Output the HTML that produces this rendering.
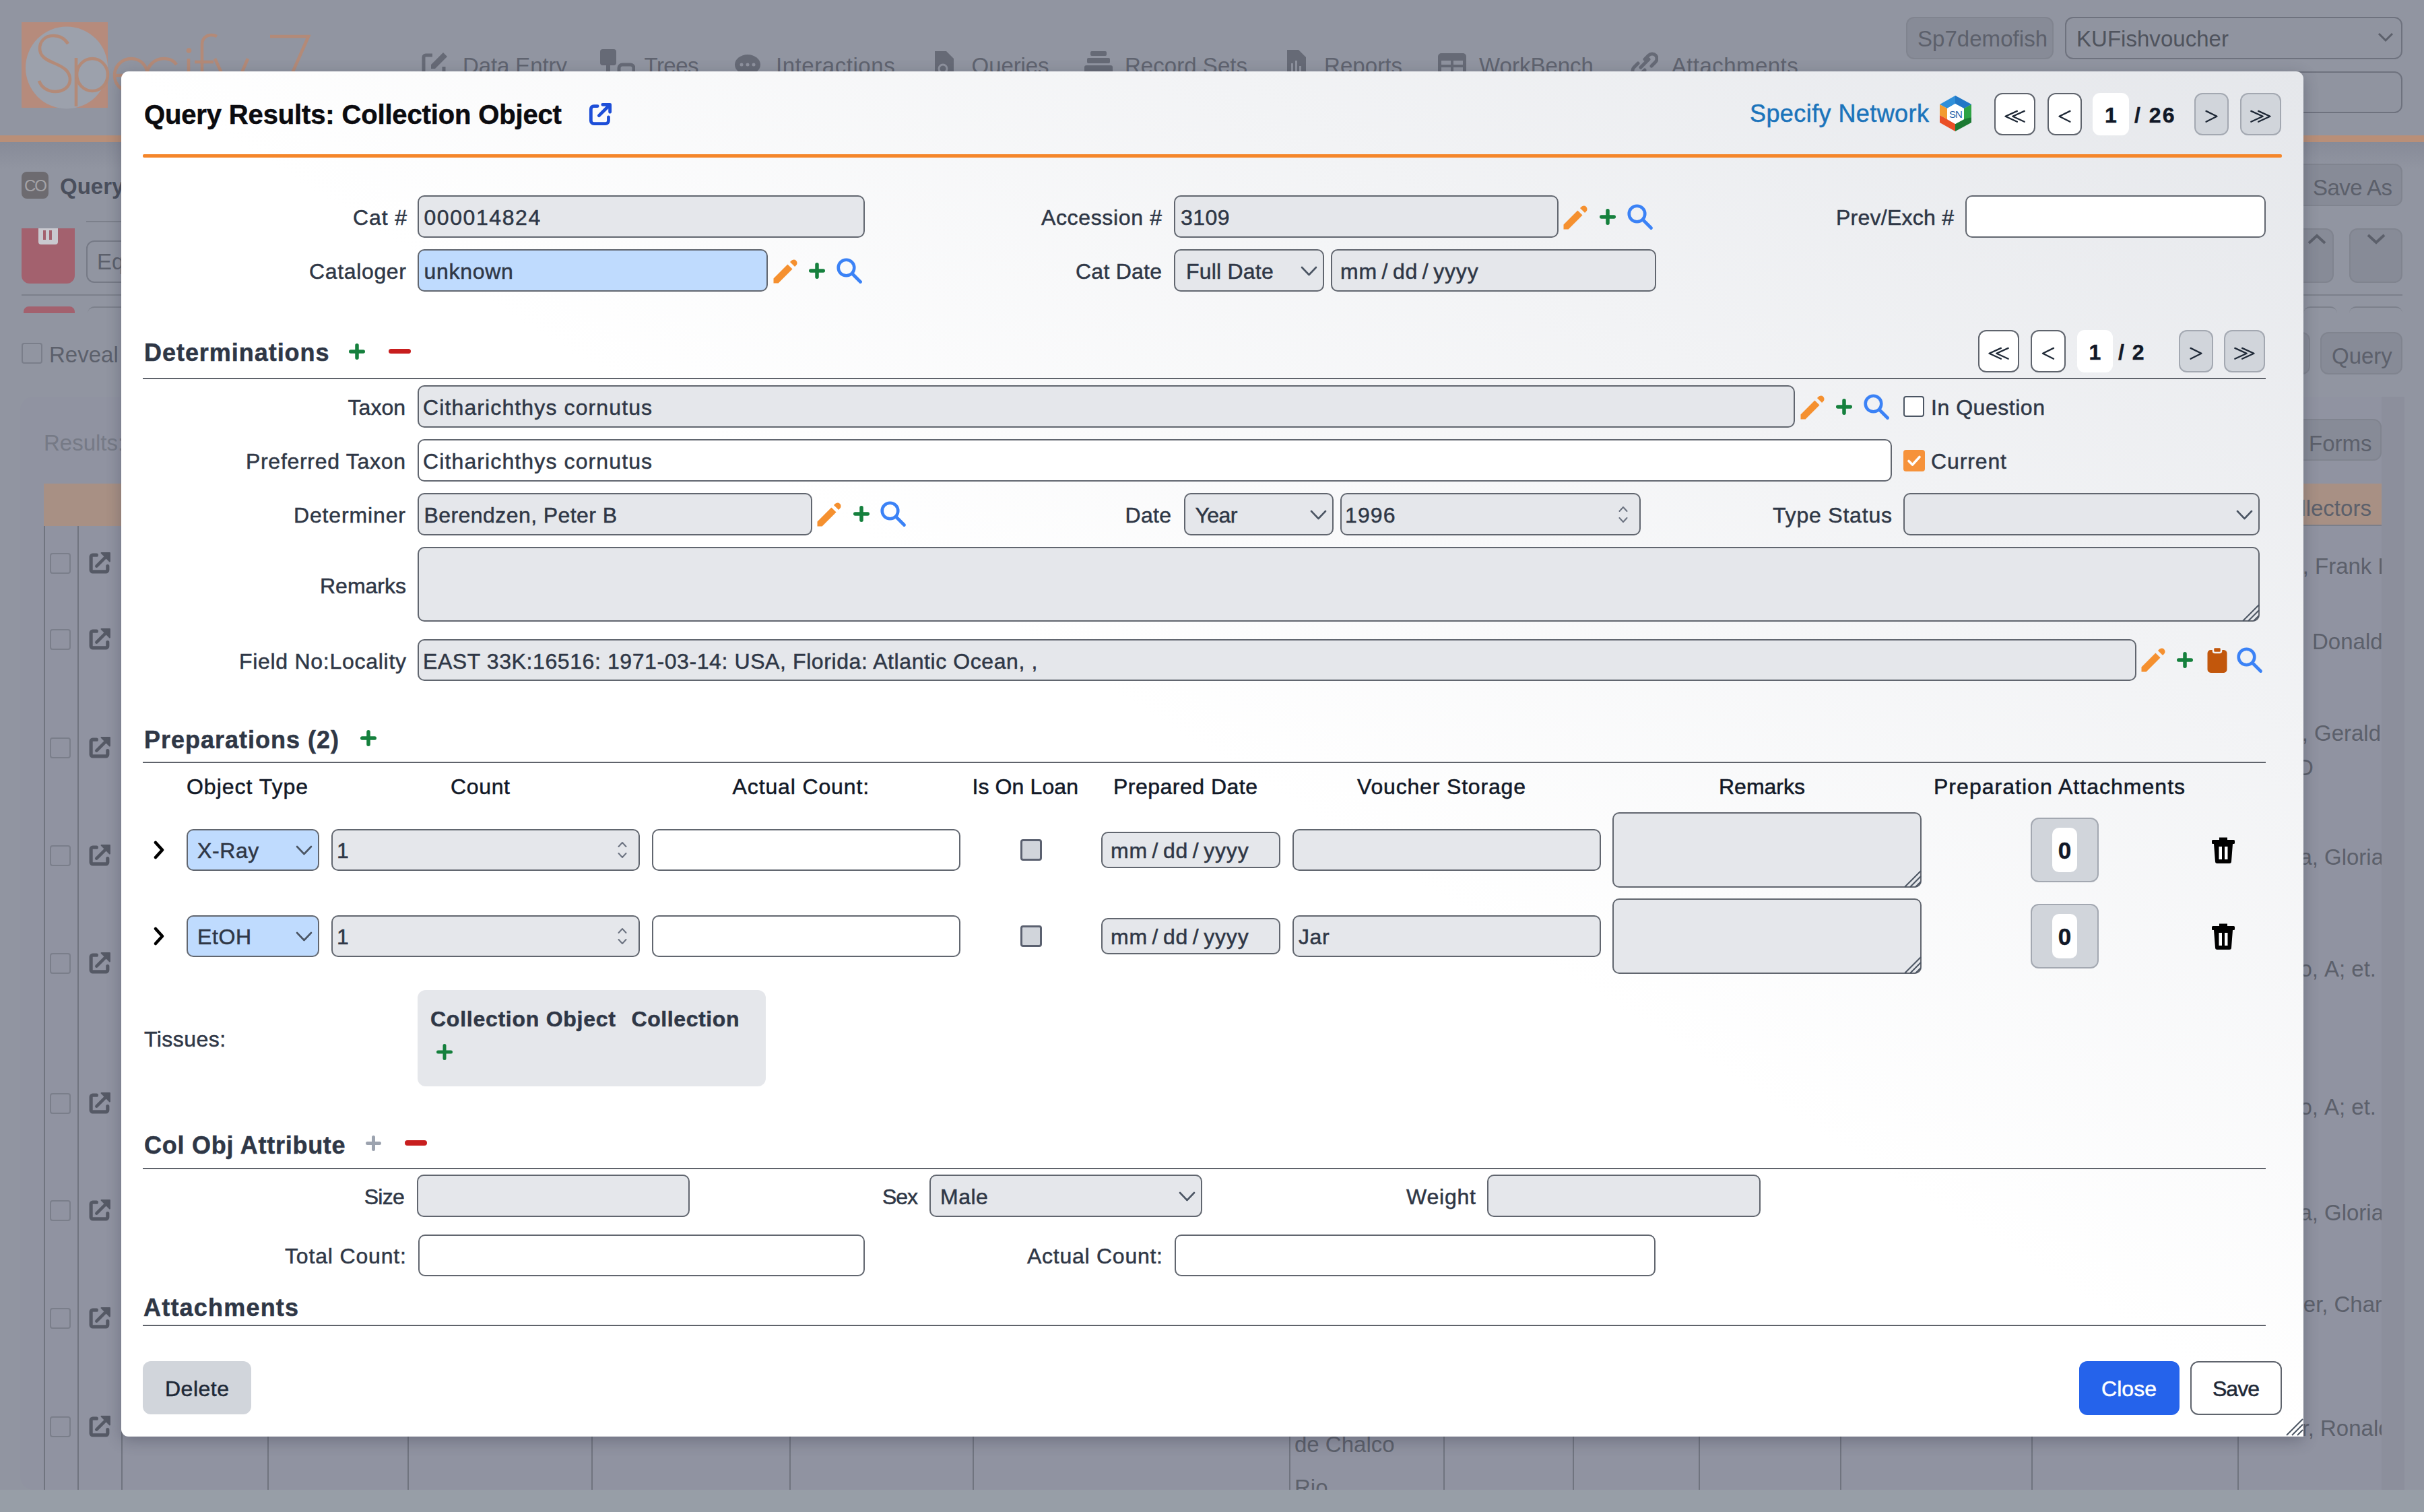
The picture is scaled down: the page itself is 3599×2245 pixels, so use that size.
<!DOCTYPE html>
<html><head><meta charset="utf-8">
<style>
*{box-sizing:border-box;margin:0;padding:0}
html,body{width:3599px;height:2245px;overflow:hidden;background:#9195a1;font-family:"Liberation Sans",sans-serif}
.a{position:absolute}
#bg{position:absolute;left:0;top:0;width:3599px;height:2245px;background:#9195a1;overflow:hidden}
.bgt{position:absolute;color:#5c606b;font-size:33px;white-space:nowrap}
.bgbox{position:absolute;border:2px solid #7d818d;border-radius:12px}
#dlg{position:absolute;left:180px;top:106px;width:3240px;height:2027px;border-radius:11px 11px 0 11px;background:linear-gradient(to bottom left,#e5e7eb 0%,#ffffff 50%,#ffffff 100%);box-shadow:0 6px 22px rgba(40,44,62,.32)}
.t{position:absolute;white-space:nowrap;color:#2e3440;font-size:32px;line-height:36px;-webkit-text-stroke:0.5px currentColor}
.lbl{position:absolute;white-space:nowrap;color:#2e3440;font-size:32px;line-height:36px;text-align:right}
.inp{position:absolute;border:2px solid #61666f;border-radius:10px;background:#e6e7eb;height:63px;
 color:#2e3440;font-size:32px;line-height:59px;padding-left:9px;white-space:nowrap;overflow:hidden}
.wh{background:#fff}
.bl{background:#bfdbfe}
.hdr{position:absolute;white-space:nowrap;color:#2e3440;font-size:35px;font-weight:bold;line-height:40px}
.hr{position:absolute;height:2px;background:#5f636b}
</style></head><body>
<div id="bg">
<div class="a" style="left:0px;top:211px;width:3599px;height:40px;background:linear-gradient(#878b98,#9195a1)"></div>
<div class="a" style="left:0px;top:201px;width:3599px;height:10px;background:#b98f78"></div>
<svg class="a" style="left:0;top:0" width="480" height="180" viewBox="0 0 480 180">
<rect x="32" y="33" width="128" height="127" fill="#b68b7c"/>
<circle cx="99" cy="100.5" r="61" fill="#9ca1ac"/>
<g fill="none" stroke="#b38a78" stroke-width="4.6" stroke-linecap="butt">
<path d="M101 65C96 57 88 53 79 53C66 53 59 62 59 72C59 84 69 89 81 94C95 100 104 106 104 118C104 129 94 136 82 136C70 136 61 129 58 120"/>
<path d="M113 86V158"/>
<ellipse cx="137" cy="111" rx="23" ry="24"/>
<path d="M170 112H219C219 97 208 87 195 87C181 87 170 98 170 112C170 126 181 136 195 136C204 136 211 132 215 126"/>
<path d="M262 96C258 90 251 87 243 87C229 87 218 98 218 112C218 126 229 136 243 136C251 136 258 133 262 127"/>
<path d="M280 87V136"/>
<path d="M300 136V66C300 57 306 52 314 52C317 52 320 53 322 54"/>
<path d="M289 92H317"/>
<path d="M319 87L342 136M368 87L332 170"/>
<path d="M401 54H458L420 140"/>
</g>
<circle cx="280.5" cy="75" r="3.8" fill="#b38a78"/>
</svg>
<div class="bgt" style="left:687px;top:79.2px;font-size:33px;color:#5f636f;letter-spacing:-0.10px;">Data Entry</div>
<div class="bgt" style="left:956.5px;top:79.2px;font-size:33px;color:#5f636f;letter-spacing:-0.54px;">Trees</div>
<div class="bgt" style="left:1152px;top:79.2px;font-size:33px;color:#5f636f;letter-spacing:0.55px;">Interactions</div>
<div class="bgt" style="left:1442.6px;top:79.2px;font-size:33px;color:#5f636f;letter-spacing:-0.09px;">Queries</div>
<div class="bgt" style="left:1670px;top:79.2px;font-size:33px;color:#5f636f;letter-spacing:0.04px;">Record Sets</div>
<div class="bgt" style="left:1966px;top:79.2px;font-size:33px;color:#5f636f;letter-spacing:0.07px;">Reports</div>
<div class="bgt" style="left:2196px;top:79.2px;font-size:33px;color:#5f636f;letter-spacing:0.00px;">WorkBench</div>
<div class="bgt" style="left:2481.7px;top:79.2px;font-size:33px;color:#5f636f;letter-spacing:0.46px;">Attachments</div>
<svg class="a" style="left:624px;top:74px" width="44" height="40" viewBox="0 0 44 40"><path d="M18 8H8a3 3 0 0 0-3 3v24a3 3 0 0 0 3 3h24a3 3 0 0 0 3-3V25" fill="none" stroke="#666a76" stroke-width="5"/><path d="M34 4L40 10L22 28H16V22Z" fill="#666a76"/></svg>
<svg class="a" style="left:889px;top:72px" width="54" height="40" viewBox="0 0 54 40"><rect x="2" y="1" width="24" height="24" rx="4" fill="#666a76"/><rect x="11" y="22" width="6" height="16" fill="#666a76"/><rect x="30" y="24" width="22" height="16" rx="5" fill="none" stroke="#666a76" stroke-width="5"/></svg>
<svg class="a" style="left:1090px;top:79px" width="42" height="34" viewBox="0 0 42 34"><ellipse cx="20" cy="17" rx="19" ry="15" fill="#666a76"/><circle cx="11" cy="17" r="2.5" fill="#8f939f"/><circle cx="20" cy="17" r="2.5" fill="#8f939f"/><circle cx="29" cy="17" r="2.5" fill="#8f939f"/></svg>
<svg class="a" style="left:1385px;top:76px" width="34" height="34" viewBox="0 0 34 34"><path d="M3 0H20L31 11V34H3Z" fill="#666a76"/><circle cx="15" cy="26" r="6" fill="none" stroke="#8f939f" stroke-width="3"/></svg>
<svg class="a" style="left:1609px;top:76px" width="44" height="34" viewBox="0 0 44 34"><rect x="10" y="0" width="24" height="7" rx="2" fill="#666a76"/><rect x="5" y="10" width="34" height="8" rx="2" fill="#666a76"/><rect x="1" y="21" width="42" height="13" rx="3" fill="#666a76"/></svg>
<svg class="a" style="left:1908px;top:74px" width="34" height="36" viewBox="0 0 34 36"><path d="M3 0H20L31 11V36H3Z" fill="#666a76"/><rect x="9" y="20" width="3" height="12" fill="#8f939f"/><rect x="15" y="16" width="3" height="16" fill="#8f939f"/><rect x="21" y="24" width="3" height="8" fill="#8f939f"/></svg>
<svg class="a" style="left:2134px;top:78px" width="44" height="34" viewBox="0 0 44 34"><rect x="1" y="1" width="42" height="32" rx="5" fill="#666a76"/><rect x="6" y="12" width="14" height="6" fill="#8f939f"/><rect x="24" y="12" width="14" height="6" fill="#8f939f"/><rect x="6" y="22" width="14" height="6" fill="#8f939f"/><rect x="24" y="22" width="14" height="6" fill="#8f939f"/></svg>
<svg class="a" style="left:2418px;top:74px" width="44" height="40" viewBox="0 0 44 40"><path d="M18 26L30 14M14 20L8 26a7 7 0 0 0 10 10l6-6M24 14l6-6a7 7 0 0 1 10 10l-6 6" fill="none" stroke="#666a76" stroke-width="5" stroke-linecap="round"/></svg>
<div class="bgbox" style="left:2830px;top:25px;width:219px;height:63px;background:#878b97;border-color:#80848f"></div>
<div class="bgt" style="left:2847px;top:39.2px;font-size:33px;color:#5c606b;letter-spacing:0.04px;">Sp7demofish</div>
<div class="bgbox" style="left:3066px;top:25px;width:501px;height:63px;background:#9094a0;border-color:#6e727e"></div>
<div class="bgt" style="left:3083px;top:39.2px;font-size:33px;color:#4f535d;letter-spacing:0.03px;">KUFishvoucher</div>
<svg class="a" style="left:3530px;top:48px" width="24" height="16" viewBox="0 0 24 16"><path d="M2 2L12 12L22 2" fill="none" stroke="#5c606b" stroke-width="3"/></svg>
<div class="bgbox" style="left:2840px;top:106px;width:727px;height:62px;background:#9094a0;border-color:#6e727e"></div>
<div class="a" style="left:32px;top:255px;width:40px;height:40px;background:#6d6b70;border-radius:8px"></div>
<div class="bgt" style="left:36px;top:261.8px;font-size:24px;color:#a4a3a8;letter-spacing:-2px;">CO</div>
<div class="bgt" style="left:89px;top:258.2px;font-size:33px;color:#4a4f5c;font-weight:bold;">Query</div>
<div class="a" style="left:32px;top:339px;width:79px;height:82px;background:#a3616e;border-radius:0 0 12px 12px"></div>
<div class="a" style="left:57px;top:339px;width:29px;height:24px;background:#c9c9cf;border-radius:0 0 4px 4px"></div>
<div class="a" style="left:64px;top:342px;width:4px;height:14px;background:#a3616e"></div>
<div class="a" style="left:73px;top:342px;width:4px;height:14px;background:#a3616e"></div>
<div class="a" style="left:128px;top:357px;width:70px;height:63px;border:2px solid #767a86;border-radius:12px"></div>
<div class="bgt" style="left:144px;top:370.2px;font-size:33px;color:#5c606b;">Eq</div>
<div class="a" style="left:128px;top:328px;width:60px;height:2px;background:#7c808b"></div>
<div class="a" style="left:32px;top:437px;width:160px;height:2px;background:#7c808b"></div>
<div class="a" style="left:35px;top:455px;width:76px;height:10px;background:#a3616e;border-radius:8px 8px 0 0"></div>
<div class="a" style="left:130px;top:455px;width:60px;height:10px;border-top:2px solid #7c808b;border-radius:10px 10px 0 0"></div>
<div class="a" style="left:32px;top:509px;width:31px;height:31px;border:2px solid #7a7e8a;border-radius:4px"></div>
<div class="bgt" style="left:73px;top:508.2px;font-size:33px;color:#5c606b;">Reveal</div>
<div class="a" style="left:30px;top:589px;width:3540px;height:1623px;background:#9093a1;border-radius:20px"></div>
<div class="bgt" style="left:65px;top:639.2px;font-size:33px;color:#767a86;">Results:</div>
<div class="a" style="left:65px;top:718px;width:3471px;height:63px;background:#a89084"></div>
<div class="a" style="left:65px;top:781px;width:2px;height:1431px;background:#70747f"></div>
<div class="a" style="left:115px;top:781px;width:2px;height:1431px;background:#70747f"></div>
<div class="a" style="left:180px;top:781px;width:2px;height:1431px;background:#70747f"></div>
<div class="a" style="left:397px;top:781px;width:2px;height:1431px;background:#70747f"></div>
<div class="a" style="left:605px;top:781px;width:2px;height:1431px;background:#70747f"></div>
<div class="a" style="left:878px;top:781px;width:2px;height:1431px;background:#70747f"></div>
<div class="a" style="left:1172px;top:781px;width:2px;height:1431px;background:#70747f"></div>
<div class="a" style="left:1444px;top:781px;width:2px;height:1431px;background:#70747f"></div>
<div class="a" style="left:1914px;top:781px;width:2px;height:1431px;background:#70747f"></div>
<div class="a" style="left:2143px;top:781px;width:2px;height:1431px;background:#70747f"></div>
<div class="a" style="left:2335px;top:781px;width:2px;height:1431px;background:#70747f"></div>
<div class="a" style="left:2522px;top:781px;width:2px;height:1431px;background:#70747f"></div>
<div class="a" style="left:2732px;top:781px;width:2px;height:1431px;background:#70747f"></div>
<div class="a" style="left:3016px;top:781px;width:2px;height:1431px;background:#70747f"></div>
<div class="a" style="left:3322px;top:781px;width:2px;height:1431px;background:#70747f"></div>
<div class="a" style="left:74px;top:821px;width:31px;height:31px;border:2px solid #7a7e8a;border-radius:4px"></div>
<svg class="a" style="left:131px;top:818px" width="35" height="35" viewBox="0 0 34 34"><path d="M12 6H6.5a2.5 2.5 0 0 0-2.5 2.5v19a2.5 2.5 0 0 0 2.5 2.5h19a2.5 2.5 0 0 0 2.5-2.5V22" fill="none" stroke="#555965" stroke-width="5" stroke-linecap="round" stroke-linejoin="round"/><path d="M19 3H31V15Z" fill="#555965" stroke="#555965" stroke-width="2" stroke-linejoin="round"/><path d="M28 6L12 22" stroke="#555965" stroke-width="4.5" stroke-linecap="round"/></svg>
<div class="a" style="left:74px;top:934px;width:31px;height:31px;border:2px solid #7a7e8a;border-radius:4px"></div>
<svg class="a" style="left:131px;top:931px" width="35" height="35" viewBox="0 0 34 34"><path d="M12 6H6.5a2.5 2.5 0 0 0-2.5 2.5v19a2.5 2.5 0 0 0 2.5 2.5h19a2.5 2.5 0 0 0 2.5-2.5V22" fill="none" stroke="#555965" stroke-width="5" stroke-linecap="round" stroke-linejoin="round"/><path d="M19 3H31V15Z" fill="#555965" stroke="#555965" stroke-width="2" stroke-linejoin="round"/><path d="M28 6L12 22" stroke="#555965" stroke-width="4.5" stroke-linecap="round"/></svg>
<div class="a" style="left:74px;top:1095px;width:31px;height:31px;border:2px solid #7a7e8a;border-radius:4px"></div>
<svg class="a" style="left:131px;top:1092px" width="35" height="35" viewBox="0 0 34 34"><path d="M12 6H6.5a2.5 2.5 0 0 0-2.5 2.5v19a2.5 2.5 0 0 0 2.5 2.5h19a2.5 2.5 0 0 0 2.5-2.5V22" fill="none" stroke="#555965" stroke-width="5" stroke-linecap="round" stroke-linejoin="round"/><path d="M19 3H31V15Z" fill="#555965" stroke="#555965" stroke-width="2" stroke-linejoin="round"/><path d="M28 6L12 22" stroke="#555965" stroke-width="4.5" stroke-linecap="round"/></svg>
<div class="a" style="left:74px;top:1255px;width:31px;height:31px;border:2px solid #7a7e8a;border-radius:4px"></div>
<svg class="a" style="left:131px;top:1252px" width="35" height="35" viewBox="0 0 34 34"><path d="M12 6H6.5a2.5 2.5 0 0 0-2.5 2.5v19a2.5 2.5 0 0 0 2.5 2.5h19a2.5 2.5 0 0 0 2.5-2.5V22" fill="none" stroke="#555965" stroke-width="5" stroke-linecap="round" stroke-linejoin="round"/><path d="M19 3H31V15Z" fill="#555965" stroke="#555965" stroke-width="2" stroke-linejoin="round"/><path d="M28 6L12 22" stroke="#555965" stroke-width="4.5" stroke-linecap="round"/></svg>
<div class="a" style="left:74px;top:1415px;width:31px;height:31px;border:2px solid #7a7e8a;border-radius:4px"></div>
<svg class="a" style="left:131px;top:1412px" width="35" height="35" viewBox="0 0 34 34"><path d="M12 6H6.5a2.5 2.5 0 0 0-2.5 2.5v19a2.5 2.5 0 0 0 2.5 2.5h19a2.5 2.5 0 0 0 2.5-2.5V22" fill="none" stroke="#555965" stroke-width="5" stroke-linecap="round" stroke-linejoin="round"/><path d="M19 3H31V15Z" fill="#555965" stroke="#555965" stroke-width="2" stroke-linejoin="round"/><path d="M28 6L12 22" stroke="#555965" stroke-width="4.5" stroke-linecap="round"/></svg>
<div class="a" style="left:74px;top:1623px;width:31px;height:31px;border:2px solid #7a7e8a;border-radius:4px"></div>
<svg class="a" style="left:131px;top:1620px" width="35" height="35" viewBox="0 0 34 34"><path d="M12 6H6.5a2.5 2.5 0 0 0-2.5 2.5v19a2.5 2.5 0 0 0 2.5 2.5h19a2.5 2.5 0 0 0 2.5-2.5V22" fill="none" stroke="#555965" stroke-width="5" stroke-linecap="round" stroke-linejoin="round"/><path d="M19 3H31V15Z" fill="#555965" stroke="#555965" stroke-width="2" stroke-linejoin="round"/><path d="M28 6L12 22" stroke="#555965" stroke-width="4.5" stroke-linecap="round"/></svg>
<div class="a" style="left:74px;top:1782px;width:31px;height:31px;border:2px solid #7a7e8a;border-radius:4px"></div>
<svg class="a" style="left:131px;top:1779px" width="35" height="35" viewBox="0 0 34 34"><path d="M12 6H6.5a2.5 2.5 0 0 0-2.5 2.5v19a2.5 2.5 0 0 0 2.5 2.5h19a2.5 2.5 0 0 0 2.5-2.5V22" fill="none" stroke="#555965" stroke-width="5" stroke-linecap="round" stroke-linejoin="round"/><path d="M19 3H31V15Z" fill="#555965" stroke="#555965" stroke-width="2" stroke-linejoin="round"/><path d="M28 6L12 22" stroke="#555965" stroke-width="4.5" stroke-linecap="round"/></svg>
<div class="a" style="left:74px;top:1942px;width:31px;height:31px;border:2px solid #7a7e8a;border-radius:4px"></div>
<svg class="a" style="left:131px;top:1939px" width="35" height="35" viewBox="0 0 34 34"><path d="M12 6H6.5a2.5 2.5 0 0 0-2.5 2.5v19a2.5 2.5 0 0 0 2.5 2.5h19a2.5 2.5 0 0 0 2.5-2.5V22" fill="none" stroke="#555965" stroke-width="5" stroke-linecap="round" stroke-linejoin="round"/><path d="M19 3H31V15Z" fill="#555965" stroke="#555965" stroke-width="2" stroke-linejoin="round"/><path d="M28 6L12 22" stroke="#555965" stroke-width="4.5" stroke-linecap="round"/></svg>
<div class="a" style="left:74px;top:2103px;width:31px;height:31px;border:2px solid #7a7e8a;border-radius:4px"></div>
<svg class="a" style="left:131px;top:2100px" width="35" height="35" viewBox="0 0 34 34"><path d="M12 6H6.5a2.5 2.5 0 0 0-2.5 2.5v19a2.5 2.5 0 0 0 2.5 2.5h19a2.5 2.5 0 0 0 2.5-2.5V22" fill="none" stroke="#555965" stroke-width="5" stroke-linecap="round" stroke-linejoin="round"/><path d="M19 3H31V15Z" fill="#555965" stroke="#555965" stroke-width="2" stroke-linejoin="round"/><path d="M28 6L12 22" stroke="#555965" stroke-width="4.5" stroke-linecap="round"/></svg>
<div class="bgbox" style="left:3400px;top:243px;width:167px;height:63px;background:#878b97;border-color:#80848f"></div>
<div class="bgt" style="left:3434px;top:260.2px;font-size:33px;color:#5c606b;letter-spacing:-0.51px;">Save As</div>
<div class="bgbox" style="left:3380px;top:339px;width:85px;height:81px;background:#878b97;border-color:#80848f"></div>
<svg class="a" style="left:3425px;top:346px" width="30" height="18" viewBox="0 0 30 18"><path d="M3 15L15 4L27 15" fill="none" stroke="#5c606b" stroke-width="4"/></svg>
<div class="bgbox" style="left:3488px;top:339px;width:79px;height:81px;background:#878b97;border-color:#80848f"></div>
<svg class="a" style="left:3513px;top:346px" width="30" height="18" viewBox="0 0 30 18"><path d="M3 3L15 14L27 3" fill="none" stroke="#5c606b" stroke-width="4"/></svg>
<div class="a" style="left:3400px;top:437px;width:167px;height:2px;background:#7c808b"></div>
<div class="a" style="left:3420px;top:455px;width:50px;height:10px;border-top:2px solid #7c808b;border-radius:10px 10px 0 0"></div>
<div class="a" style="left:3488px;top:455px;width:79px;height:10px;border-top:2px solid #7c808b;border-radius:10px 10px 0 0"></div>
<div class="bgbox" style="left:3380px;top:493px;width:50px;height:63px;background:#878b97;border-color:#80848f"></div>
<div class="bgbox" style="left:3445px;top:493px;width:122px;height:63px;background:#878b97;border-color:#80848f"></div>
<div class="bgt" style="left:3462px;top:510.2px;font-size:33px;color:#5c606b;">Query</div>
<div class="bgbox" style="left:3380px;top:622px;width:156px;height:62px;background:#878b97;border-color:#80848f"></div>
<div class="bgt" style="left:3428px;top:640.2px;font-size:33px;color:#5c606b;">Forms</div>
<div class="bgt" style="left:3398px;top:736.2px;font-size:33px;color:#5c606b;">ollectors</div>
<div class="a" style="left:3420px;top:779px;width:116px;height:2px;background:#7b7f8a"></div>
<div class="a" style="left:3380px;top:790px;width:156px;height:1422px;overflow:hidden">
<div class="bgt" style="left:57px;top:32.2px;font-size:33px;color:#5c606b">Frank E</div>
<div class="bgt" style="right:108px;top:32.2px;font-size:33px;color:#5c606b">,</div>
<div class="bgt" style="left:53px;top:144.2px;font-size:33px;color:#5c606b">Donald</div>
<div class="bgt" style="left:56px;top:280.2px;font-size:33px;color:#5c606b">Gerald</div>
<div class="bgt" style="right:109px;top:280.2px;font-size:33px;color:#5c606b">,</div>
<div class="bgt" style="left:31px;top:331.2px;font-size:33px;color:#5c606b">D</div>
<div class="bgt" style="left:71px;top:463.7px;font-size:33px;color:#5c606b">Gloria</div>
<div class="bgt" style="right:94px;top:463.7px;font-size:33px;color:#5c606b">a,</div>
<div class="bgt" style="left:71px;top:630.2px;font-size:33px;color:#5c606b">A; et.</div>
<div class="bgt" style="right:94px;top:630.2px;font-size:33px;color:#5c606b">o,</div>
<div class="bgt" style="left:71px;top:834.7px;font-size:33px;color:#5c606b">A; et.</div>
<div class="bgt" style="right:94px;top:834.7px;font-size:33px;color:#5c606b">o,</div>
<div class="bgt" style="left:71px;top:992.2px;font-size:33px;color:#5c606b">Gloria</div>
<div class="bgt" style="right:94px;top:992.2px;font-size:33px;color:#5c606b">a,</div>
<div class="bgt" style="left:85.5px;top:1127.8px;font-size:33px;color:#5c606b">Char</div>
<div class="bgt" style="right:79.5px;top:1127.8px;font-size:33px;color:#5c606b">er,</div>
<div class="bgt" style="left:65px;top:1312.2px;font-size:33px;color:#5c606b">Ronald</div>
<div class="bgt" style="right:100px;top:1312.2px;font-size:33px;color:#5c606b">r,</div>
</div>
<div class="a" style="left:3536px;top:589px;width:34px;height:1623px;background:#8c8f9c"></div>
<div class="bgt" style="left:1922px;top:2126.2px;font-size:33px;color:#5c606b;">de Chalco</div>
<div class="bgt" style="left:1922px;top:2190.2px;font-size:33px;color:#5c606b;">Rio</div>
<div class="a" style="left:0px;top:2212px;width:3599px;height:33px;background:#979ea7"></div>
</div>
<div id="dlg"></div>
<div id="cont">
<div class="t" style="left:214px;top:147.4px;font-size:40px;line-height:46px;font-weight:bold;color:#0b0b0f;letter-spacing:-0.15px;">Query Results: Collection Object</div>
<svg class="a" style="left:872.5px;top:150.5px" width="37" height="37" viewBox="0 0 34 34"><path d="M13 6H8a4 4 0 0 0-4 4v16a4 4 0 0 0 4 4h16a4 4 0 0 0 4-4v-5" fill="none" stroke="#1d4ed8" stroke-width="4.4" stroke-linecap="round" stroke-linejoin="round"/><path d="M20 4H30V14M29 5L15 19" fill="none" stroke="#1d4ed8" stroke-width="4.4" stroke-linecap="round" stroke-linejoin="round"/></svg>
<div class="t" style="left:2598px;top:147.8px;font-size:36px;line-height:41px;color:#1b74bb;letter-spacing:0.42px;">Specify Network</div>
<svg class="a" style="left:2878px;top:140px" width="52" height="58" viewBox="0 0 52 58">
<polygon points="25,2 49,15 38,21 25,14 13,21 2,15" fill="#2f8fd9"/>
<polygon points="25,2 49,15 38,21 25,14" fill="#2277c6"/>
<polygon points="2,15 13,21 13,37 2,31" fill="#f39b30"/>
<polygon points="2,31 13,37 25,44 25,55 2,42" fill="#ea4f26"/>
<polygon points="49,15 49,34 38,40 38,21" fill="#2ea345"/>
<polygon points="49,34 49,42 25,55 25,44 38,37" fill="#1c7a33"/>
<polygon points="25,14 38,21 38,37 25,44 13,37 13,21" fill="#ffffff"/>
<text x="25.5" y="35" font-family="Liberation Sans" font-size="15" fill="#1f5fa8" text-anchor="middle" letter-spacing="-1">SN</text>
</svg>
<div class="a" style="left:2961px;top:138px;width:61px;height:63px;background:#fff;border:2px solid #5f646d;border-radius:12px"></div>
<svg class="a" style="left:2961px;top:138px" width="61" height="63" viewBox="0 0 61 63"><path d="M33.9 26.9L16.5 34.8L33.9 42.699999999999996M44.7 26.9L27.3 34.8L44.7 42.699999999999996" fill="none" stroke="#1f2937" stroke-width="2.3" stroke-linecap="round" stroke-linejoin="round"/></svg>
<div class="a" style="left:3040px;top:138px;width:51px;height:63px;background:#fff;border:2px solid #5f646d;border-radius:12px"></div>
<svg class="a" style="left:3040px;top:138px" width="51" height="63" viewBox="0 0 51 63"><path d="M33.5 26.9L17.5 34.8L33.5 42.699999999999996" fill="none" stroke="#1f2937" stroke-width="2.3" stroke-linecap="round" stroke-linejoin="round"/></svg>
<div class="a" style="left:3107px;top:138px;width:54px;height:63px;background:#fff;border-radius:11px"></div>
<div class="t" style="left:2734.0px;width:800px;text-align:center;top:152.8px;font-size:32px;line-height:37px;font-weight:bold;color:#111827;">1</div>
<div class="t" style="left:3169px;top:152.8px;font-size:32px;line-height:37px;font-weight:bold;color:#111827;letter-spacing:2.04px;">/ 26</div>
<div class="a" style="left:3258px;top:138px;width:51px;height:63px;background:#d1d5db;border:2px solid #a3a8b1;border-radius:12px"></div>
<svg class="a" style="left:3258px;top:138px" width="51" height="63" viewBox="0 0 51 63"><path d="M17.5 26.9L33.5 34.8L17.5 42.699999999999996" fill="none" stroke="#1f2937" stroke-width="2.3" stroke-linecap="round" stroke-linejoin="round"/></svg>
<div class="a" style="left:3326px;top:138px;width:61px;height:63px;background:#d1d5db;border:2px solid #a3a8b1;border-radius:12px"></div>
<svg class="a" style="left:3326px;top:138px" width="61" height="63" viewBox="0 0 61 63"><path d="M27.1 26.9L44.5 34.8L27.1 42.699999999999996M16.3 26.9L33.7 34.8L16.3 42.699999999999996" fill="none" stroke="#1f2937" stroke-width="2.3" stroke-linecap="round" stroke-linejoin="round"/></svg>
<div class="a" style="left:212px;top:229px;width:3176px;height:5px;background:#f5862a;border-radius:2px"></div>
<div class="t" style="right:2995px;top:305.3px;font-size:32px;line-height:37px;color:#2f3746;letter-spacing:0.88px;margin-right:-0.88px;">Cat #</div>
<div class="a" style="left:620px;top:290px;width:664px;height:63px;background:#e5e7eb;border:2px solid #61666f;border-radius:10px;"></div>
<div class="t" style="left:629.5px;top:305.3px;font-size:32px;line-height:37px;color:#2f3746;letter-spacing:1.57px;">000014824</div>
<div class="t" style="right:1874px;top:305.3px;font-size:32px;line-height:37px;color:#2f3746;letter-spacing:0.65px;margin-right:-0.65px;">Accession #</div>
<div class="a" style="left:1743px;top:290px;width:571px;height:63px;background:#e5e7eb;border:2px solid #61666f;border-radius:10px;"></div>
<div class="t" style="left:1753px;top:305.3px;font-size:32px;line-height:37px;color:#2f3746;letter-spacing:0.47px;">3109</div>
<svg class="a" style="left:2313.5px;top:297.5px" width="50" height="50" viewBox="0 0 20 20"><path fill="#f5902f" d="M13.586 3.586a2 2 0 112.828 2.828l-.793.793-2.828-2.828.793-.793zM11.379 5.793L3 14.172V17h2.828l8.38-8.379-2.83-2.828z"/></svg>
<svg class="a" style="left:2371px;top:306px" width="32" height="32" viewBox="-4 -4 32 32"><path d="M12.0 2.75V21.25M2.75 12.0H21.25" stroke="#15803d" stroke-width="5.5" stroke-linecap="round"/></svg>
<svg class="a" style="left:2416px;top:303px" width="40" height="40" viewBox="0 0 40 40"><circle cx="14.5" cy="14.5" r="11.8" fill="none" stroke="#3b82f6" stroke-width="4.6"/><path d="M23.5 23.5L35.5 35.5" stroke="#3b82f6" stroke-width="4.8" stroke-linecap="round"/></svg>
<div class="t" style="right:698px;top:305.3px;font-size:32px;line-height:37px;color:#2f3746;letter-spacing:0.25px;margin-right:-0.25px;">Prev/Exch #</div>
<div class="a" style="left:2918px;top:290px;width:446px;height:63px;background:#ffffff;border:2px solid #61666f;border-radius:10px;"></div>
<div class="t" style="right:2996px;top:385.3px;font-size:32px;line-height:37px;color:#2f3746;letter-spacing:0.66px;margin-right:-0.66px;">Cataloger</div>
<div class="a" style="left:620px;top:370px;width:520px;height:63px;background:#bfdbfe;border:2px solid #61666f;border-radius:10px;"></div>
<div class="t" style="left:629.5px;top:385.3px;font-size:32px;line-height:37px;color:#2f3746;letter-spacing:0.70px;">unknown</div>
<svg class="a" style="left:1140.5px;top:377.5px" width="50" height="50" viewBox="0 0 20 20"><path fill="#f5902f" d="M13.586 3.586a2 2 0 112.828 2.828l-.793.793-2.828-2.828.793-.793zM11.379 5.793L3 14.172V17h2.828l8.38-8.379-2.83-2.828z"/></svg>
<svg class="a" style="left:1197px;top:386px" width="32" height="32" viewBox="-4 -4 32 32"><path d="M12.0 2.75V21.25M2.75 12.0H21.25" stroke="#15803d" stroke-width="5.5" stroke-linecap="round"/></svg>
<svg class="a" style="left:1242px;top:383px" width="40" height="40" viewBox="0 0 40 40"><circle cx="14.5" cy="14.5" r="11.8" fill="none" stroke="#3b82f6" stroke-width="4.6"/><path d="M23.5 23.5L35.5 35.5" stroke="#3b82f6" stroke-width="4.8" stroke-linecap="round"/></svg>
<div class="t" style="right:1874px;top:385.3px;font-size:32px;line-height:37px;color:#2f3746;letter-spacing:0.25px;margin-right:-0.25px;">Cat Date</div>
<div class="a" style="left:1743px;top:370px;width:223px;height:63px;background:#e5e7eb;border:2px solid #61666f;border-radius:10px;"></div>
<div class="t" style="left:1761px;top:385.3px;font-size:32px;line-height:37px;color:#2f3746;letter-spacing:0.21px;">Full Date</div>
<svg class="a" style="left:1929.5px;top:393.5px" width="27" height="17" viewBox="-3 -3 27 17"><path d="M0 0L10.5 11L21 0" fill="none" stroke="#4b5563" stroke-width="2.6" stroke-linecap="round" stroke-linejoin="round"/></svg>
<div class="a" style="left:1976px;top:370px;width:483px;height:63px;background:#e5e7eb;border:2px solid #61666f;border-radius:10px;"></div>
<div class="t" style="left:1990px;top:385.3px;font-size:32px;line-height:37px;color:#2f3746;letter-spacing:0.80px;word-spacing:-3px;">mm / dd / yyyy</div>
<div class="t" style="left:214px;top:502.8px;font-size:36px;line-height:41px;font-weight:bold;color:#2f3746;letter-spacing:0.96px;">Determinations</div>
<svg class="a" style="left:514px;top:506px" width="32" height="32" viewBox="-4 -4 32 32"><path d="M12.0 2.75V21.25M2.75 12.0H21.25" stroke="#15803d" stroke-width="5.5" stroke-linecap="round"/></svg>
<svg class="a" style="left:573px;top:514px" width="41" height="15" viewBox="-4 -4 41 15"><path d="M3.5 3.5H29.5" stroke="#c81e1e" stroke-width="7" stroke-linecap="round"/></svg>
<div class="a" style="left:2937px;top:490px;width:61px;height:63px;background:#fff;border:2px solid #5f646d;border-radius:12px"></div>
<svg class="a" style="left:2937px;top:490px" width="61" height="63" viewBox="0 0 61 63"><path d="M33.9 26.9L16.5 34.8L33.9 42.699999999999996M44.7 26.9L27.3 34.8L44.7 42.699999999999996" fill="none" stroke="#1f2937" stroke-width="2.3" stroke-linecap="round" stroke-linejoin="round"/></svg>
<div class="a" style="left:3015px;top:490px;width:52px;height:63px;background:#fff;border:2px solid #5f646d;border-radius:12px"></div>
<svg class="a" style="left:3015px;top:490px" width="52" height="63" viewBox="0 0 52 63"><path d="M34.0 26.9L18.0 34.8L34.0 42.699999999999996" fill="none" stroke="#1f2937" stroke-width="2.3" stroke-linecap="round" stroke-linejoin="round"/></svg>
<div class="a" style="left:3084px;top:490px;width:53px;height:63px;background:#fff;border-radius:11px"></div>
<div class="t" style="left:2710.5px;width:800px;text-align:center;top:504.8px;font-size:32px;line-height:37px;font-weight:bold;color:#111827;">1</div>
<div class="t" style="left:3145px;top:504.8px;font-size:32px;line-height:37px;font-weight:bold;color:#111827;letter-spacing:1.46px;">/ 2</div>
<div class="a" style="left:3235px;top:490px;width:51px;height:63px;background:#d1d5db;border:2px solid #a3a8b1;border-radius:12px"></div>
<svg class="a" style="left:3235px;top:490px" width="51" height="63" viewBox="0 0 51 63"><path d="M17.5 26.9L33.5 34.8L17.5 42.699999999999996" fill="none" stroke="#1f2937" stroke-width="2.3" stroke-linecap="round" stroke-linejoin="round"/></svg>
<div class="a" style="left:3302px;top:490px;width:61px;height:63px;background:#d1d5db;border:2px solid #a3a8b1;border-radius:12px"></div>
<svg class="a" style="left:3302px;top:490px" width="61" height="63" viewBox="0 0 61 63"><path d="M27.1 26.9L44.5 34.8L27.1 42.699999999999996M16.3 26.9L33.7 34.8L16.3 42.699999999999996" fill="none" stroke="#1f2937" stroke-width="2.3" stroke-linecap="round" stroke-linejoin="round"/></svg>
<div class="a" style="left:212px;top:561px;width:3152px;height:2px;background:#5f636b"></div>
<div class="t" style="right:2997px;top:587.3px;font-size:32px;line-height:37px;color:#2f3746;letter-spacing:0.00px;margin-right:-0.00px;">Taxon</div>
<div class="a" style="left:620px;top:572px;width:2045px;height:63px;background:#e5e7eb;border:2px solid #61666f;border-radius:10px;"></div>
<div class="t" style="left:628px;top:587.3px;font-size:32px;line-height:37px;color:#2f3746;letter-spacing:1.12px;">Citharichthys cornutus</div>
<svg class="a" style="left:2665.5px;top:579.5px" width="50" height="50" viewBox="0 0 20 20"><path fill="#f5902f" d="M13.586 3.586a2 2 0 112.828 2.828l-.793.793-2.828-2.828.793-.793zM11.379 5.793L3 14.172V17h2.828l8.38-8.379-2.83-2.828z"/></svg>
<svg class="a" style="left:2722px;top:588px" width="32" height="32" viewBox="-4 -4 32 32"><path d="M12.0 2.75V21.25M2.75 12.0H21.25" stroke="#15803d" stroke-width="5.5" stroke-linecap="round"/></svg>
<svg class="a" style="left:2767px;top:585px" width="40" height="40" viewBox="0 0 40 40"><circle cx="14.5" cy="14.5" r="11.8" fill="none" stroke="#3b82f6" stroke-width="4.6"/><path d="M23.5 23.5L35.5 35.5" stroke="#3b82f6" stroke-width="4.8" stroke-linecap="round"/></svg>
<div class="a" style="left:2826px;top:588px;width:31px;height:31px;background:#fff;border:2px solid #4b5563;border-radius:4px"></div>
<div class="t" style="left:2867px;top:587.3px;font-size:32px;line-height:37px;color:#2f3746;letter-spacing:0.53px;">In Question</div>
<div class="t" style="right:2997px;top:667.3px;font-size:32px;line-height:37px;color:#2f3746;letter-spacing:0.71px;margin-right:-0.71px;">Preferred Taxon</div>
<div class="a" style="left:620px;top:652px;width:2189px;height:63px;background:#ffffff;border:2px solid #61666f;border-radius:10px;"></div>
<div class="t" style="left:628px;top:667.3px;font-size:32px;line-height:37px;color:#2f3746;letter-spacing:1.12px;">Citharichthys cornutus</div>
<div class="a" style="left:2826px;top:668px;width:32px;height:32px;background:#f6923a;border-radius:4px"></div>
<svg class="a" style="left:2826px;top:668px" width="32" height="32" viewBox="0 0 32 32"><path d="M8 16.5L13.5 22L24 10.5" fill="none" stroke="#fff" stroke-width="3.6" stroke-linecap="round" stroke-linejoin="round"/></svg>
<div class="t" style="left:2867px;top:667.3px;font-size:32px;line-height:37px;color:#2f3746;letter-spacing:0.88px;">Current</div>
<div class="t" style="right:2997px;top:747.3px;font-size:32px;line-height:37px;color:#2f3746;letter-spacing:0.86px;margin-right:-0.86px;">Determiner</div>
<div class="a" style="left:620px;top:732px;width:586px;height:63px;background:#e5e7eb;border:2px solid #61666f;border-radius:10px;"></div>
<div class="t" style="left:629.5px;top:747.3px;font-size:32px;line-height:37px;color:#2f3746;letter-spacing:0.43px;">Berendzen, Peter B</div>
<svg class="a" style="left:1205.5px;top:738.5px" width="50" height="50" viewBox="0 0 20 20"><path fill="#f5902f" d="M13.586 3.586a2 2 0 112.828 2.828l-.793.793-2.828-2.828.793-.793zM11.379 5.793L3 14.172V17h2.828l8.38-8.379-2.83-2.828z"/></svg>
<svg class="a" style="left:1263px;top:747px" width="32" height="32" viewBox="-4 -4 32 32"><path d="M12.0 2.75V21.25M2.75 12.0H21.25" stroke="#15803d" stroke-width="5.5" stroke-linecap="round"/></svg>
<svg class="a" style="left:1307px;top:744px" width="40" height="40" viewBox="0 0 40 40"><circle cx="14.5" cy="14.5" r="11.8" fill="none" stroke="#3b82f6" stroke-width="4.6"/><path d="M23.5 23.5L35.5 35.5" stroke="#3b82f6" stroke-width="4.8" stroke-linecap="round"/></svg>
<div class="t" style="right:1860px;top:747.3px;font-size:32px;line-height:37px;color:#2f3746;letter-spacing:0.30px;margin-right:-0.30px;">Date</div>
<div class="a" style="left:1758px;top:732px;width:222px;height:63px;background:#e5e7eb;border:2px solid #61666f;border-radius:10px;"></div>
<div class="t" style="left:1774.5px;top:747.3px;font-size:32px;line-height:37px;color:#2f3746;letter-spacing:-0.55px;">Year</div>
<svg class="a" style="left:1943.5px;top:755.5px" width="27" height="17" viewBox="-3 -3 27 17"><path d="M0 0L10.5 11L21 0" fill="none" stroke="#4b5563" stroke-width="2.6" stroke-linecap="round" stroke-linejoin="round"/></svg>
<div class="a" style="left:1990px;top:732px;width:446px;height:63px;background:#e5e7eb;border:2px solid #61666f;border-radius:10px;"></div>
<div class="t" style="left:1997px;top:747.3px;font-size:32px;line-height:37px;color:#2f3746;letter-spacing:1.10px;">1996</div>
<svg class="a" style="left:2401px;top:747px" width="18" height="34" viewBox="0 0 18 34"><path d="M3.5 12L9 6L14.5 12M3.5 22L9 28L14.5 22" fill="none" stroke="#6b7280" stroke-width="2" stroke-linecap="round" stroke-linejoin="round"/></svg>
<div class="t" style="right:790px;top:747.3px;font-size:32px;line-height:37px;color:#2f3746;letter-spacing:0.80px;margin-right:-0.80px;">Type Status</div>
<div class="a" style="left:2826px;top:732px;width:529px;height:63px;background:#e5e7eb;border:2px solid #61666f;border-radius:10px;"></div>
<svg class="a" style="left:3318.5px;top:755.5px" width="27" height="17" viewBox="-3 -3 27 17"><path d="M0 0L10.5 11L21 0" fill="none" stroke="#4b5563" stroke-width="2.6" stroke-linecap="round" stroke-linejoin="round"/></svg>
<div class="t" style="right:2996px;top:852.3px;font-size:32px;line-height:37px;color:#2f3746;letter-spacing:-0.00px;margin-right:--0.00px;">Remarks</div>
<div class="a" style="left:620px;top:812px;width:2735px;height:111px;background:#e5e7eb;border:2px solid #61666f;border-radius:10px;"></div>
<svg class="a" style="left:3329px;top:897px" width="26" height="26" viewBox="0 0 26 26"><path d="M25 1L1 25M25 9L9 25M25 17L17 25" stroke="#4b5563" stroke-width="2"/></svg>
<div class="t" style="right:2996px;top:964.3px;font-size:32px;line-height:37px;color:#2f3746;letter-spacing:0.72px;margin-right:-0.72px;">Field No:Locality</div>
<div class="a" style="left:620px;top:949px;width:2552px;height:62px;background:#e5e7eb;border:2px solid #61666f;border-radius:10px;"></div>
<div class="t" style="left:628px;top:964.3px;font-size:32px;line-height:37px;color:#2f3746;letter-spacing:0.59px;">EAST 33K:16516: 1971-03-14: USA, Florida: Atlantic Ocean, ,</div>
<svg class="a" style="left:3171.5px;top:954.5px" width="50" height="50" viewBox="0 0 20 20"><path fill="#f5902f" d="M13.586 3.586a2 2 0 112.828 2.828l-.793.793-2.828-2.828.793-.793zM11.379 5.793L3 14.172V17h2.828l8.38-8.379-2.83-2.828z"/></svg>
<svg class="a" style="left:3228px;top:964px" width="32" height="32" viewBox="-4 -4 32 32"><path d="M12.0 2.75V21.25M2.75 12.0H21.25" stroke="#15803d" stroke-width="5.5" stroke-linecap="round"/></svg>
<svg class="a" style="left:3277px;top:960px" width="30" height="40" viewBox="0 0 30 40"><rect x="0.5" y="5" width="29" height="34" rx="5" fill="#c2570c"/><rect x="9" y="1" width="12" height="8" rx="2.5" fill="#c2570c" stroke="#f3f4f6" stroke-width="2.5"/></svg>
<svg class="a" style="left:3321px;top:961px" width="40" height="40" viewBox="0 0 40 40"><circle cx="14.5" cy="14.5" r="11.8" fill="none" stroke="#3b82f6" stroke-width="4.6"/><path d="M23.5 23.5L35.5 35.5" stroke="#3b82f6" stroke-width="4.8" stroke-linecap="round"/></svg>
<div class="t" style="left:214px;top:1077.8px;font-size:36px;line-height:41px;font-weight:bold;color:#2f3746;letter-spacing:0.99px;">Preparations (2)</div>
<svg class="a" style="left:531px;top:1080px" width="32" height="32" viewBox="-4 -4 32 32"><path d="M12.0 2.75V21.25M2.75 12.0H21.25" stroke="#15803d" stroke-width="5.5" stroke-linecap="round"/></svg>
<div class="a" style="left:212px;top:1131px;width:3152px;height:2px;background:#5f636b"></div>
<div class="t" style="left:277px;top:1150.3px;font-size:32px;line-height:37px;color:#111827;letter-spacing:0.98px;">Object Type</div>
<div class="t" style="left:669px;top:1150.3px;font-size:32px;line-height:37px;color:#111827;letter-spacing:0.65px;">Count</div>
<div class="t" style="left:1087.6px;top:1150.3px;font-size:32px;line-height:37px;color:#111827;letter-spacing:0.86px;">Actual Count:</div>
<div class="t" style="left:1443.5px;top:1150.3px;font-size:32px;line-height:37px;color:#111827;letter-spacing:0.11px;">Is On Loan</div>
<div class="t" style="left:1653px;top:1150.3px;font-size:32px;line-height:37px;color:#111827;letter-spacing:0.49px;">Prepared Date</div>
<div class="t" style="left:2015px;top:1150.3px;font-size:32px;line-height:37px;color:#111827;letter-spacing:0.83px;">Voucher Storage</div>
<div class="t" style="left:2552px;top:1150.3px;font-size:32px;line-height:37px;color:#111827;letter-spacing:-0.00px;">Remarks</div>
<div class="t" style="left:2871px;top:1150.3px;font-size:32px;line-height:37px;color:#111827;letter-spacing:1.03px;">Preparation Attachments</div>
<svg class="a" style="left:222px;top:1246px" width="28" height="32" viewBox="0 0 28 32"><path d="M9 5L19 16L9 27" fill="none" stroke="#000" stroke-width="4.6" stroke-linecap="round" stroke-linejoin="round"/></svg>
<div class="a" style="left:277px;top:1231px;width:197px;height:62px;background:#bfdbfe;border:2px solid #61666f;border-radius:10px;"></div>
<div class="t" style="left:293px;top:1245.3px;font-size:32px;line-height:37px;color:#2f3746;letter-spacing:0.6px;">X-Ray</div>
<svg class="a" style="left:437.5px;top:1253.5px" width="27" height="17" viewBox="-3 -3 27 17"><path d="M0 0L10.5 11L21 0" fill="none" stroke="#4b5563" stroke-width="2.6" stroke-linecap="round" stroke-linejoin="round"/></svg>
<div class="a" style="left:492px;top:1231px;width:458px;height:62px;background:#e5e7eb;border:2px solid #61666f;border-radius:10px;"></div>
<div class="t" style="left:500px;top:1245.3px;font-size:32px;line-height:37px;color:#2f3746;">1</div>
<svg class="a" style="left:915px;top:1245px" width="18" height="34" viewBox="0 0 18 34"><path d="M3.5 12L9 6L14.5 12M3.5 22L9 28L14.5 22" fill="none" stroke="#6b7280" stroke-width="2" stroke-linecap="round" stroke-linejoin="round"/></svg>
<div class="a" style="left:968px;top:1231px;width:458px;height:62px;background:#ffffff;border:2px solid #61666f;border-radius:10px;"></div>
<div class="a" style="left:1515px;top:1246px;width:32px;height:32px;background:#d1d5db;border:3px solid #5b6170;border-radius:4px"></div>
<div class="a" style="left:1635px;top:1235px;width:266px;height:54px;background:#e5e7eb;border:2px solid #61666f;border-radius:10px;"></div>
<div class="t" style="left:1649px;top:1245.3px;font-size:32px;line-height:37px;color:#2f3746;letter-spacing:0.80px;word-spacing:-3px;">mm / dd / yyyy</div>
<div class="a" style="left:1919px;top:1231px;width:458px;height:62px;background:#e5e7eb;border:2px solid #61666f;border-radius:10px;"></div>
<div class="a" style="left:2394px;top:1206px;width:459px;height:112px;background:#e5e7eb;border:2px solid #61666f;border-radius:10px;"></div>
<svg class="a" style="left:2827px;top:1292px" width="26" height="26" viewBox="0 0 26 26"><path d="M25 1L1 25M25 9L9 25M25 17L17 25" stroke="#4b5563" stroke-width="2"/></svg>
<div class="a" style="left:3015px;top:1214px;width:101px;height:96px;background:#d1d5db;border:2px solid #a3a8b1;border-radius:12px"></div>
<div class="a" style="left:3047px;top:1229px;width:37px;height:66px;background:#fff;border-radius:10px"></div>
<div class="t" style="left:2665.5px;width:800px;text-align:center;top:1243.4px;font-size:35px;line-height:40px;font-weight:bold;color:#111827;">0</div>
<svg class="a" style="left:3282px;top:1242px" width="38" height="40" viewBox="0 0 38 40"><path d="M13 1.5h12v4h-12z" fill="#000"/><rect x="2" y="5" width="34" height="6" rx="1.5" fill="#000"/><path d="M5 11h28l-2 26a3 3 0 0 1-3 3H10a3 3 0 0 1-3-3z" fill="#000"/><rect x="12.5" y="15" width="4.5" height="19" fill="#fff"/><rect x="21" y="15" width="4.5" height="19" fill="#fff"/></svg>
<svg class="a" style="left:222px;top:1374px" width="28" height="32" viewBox="0 0 28 32"><path d="M9 5L19 16L9 27" fill="none" stroke="#000" stroke-width="4.6" stroke-linecap="round" stroke-linejoin="round"/></svg>
<div class="a" style="left:277px;top:1359px;width:197px;height:62px;background:#bfdbfe;border:2px solid #61666f;border-radius:10px;"></div>
<div class="t" style="left:293px;top:1373.3px;font-size:32px;line-height:37px;color:#2f3746;letter-spacing:0.6px;">EtOH</div>
<svg class="a" style="left:437.5px;top:1381.5px" width="27" height="17" viewBox="-3 -3 27 17"><path d="M0 0L10.5 11L21 0" fill="none" stroke="#4b5563" stroke-width="2.6" stroke-linecap="round" stroke-linejoin="round"/></svg>
<div class="a" style="left:492px;top:1359px;width:458px;height:62px;background:#e5e7eb;border:2px solid #61666f;border-radius:10px;"></div>
<div class="t" style="left:500px;top:1373.3px;font-size:32px;line-height:37px;color:#2f3746;">1</div>
<svg class="a" style="left:915px;top:1373px" width="18" height="34" viewBox="0 0 18 34"><path d="M3.5 12L9 6L14.5 12M3.5 22L9 28L14.5 22" fill="none" stroke="#6b7280" stroke-width="2" stroke-linecap="round" stroke-linejoin="round"/></svg>
<div class="a" style="left:968px;top:1359px;width:458px;height:62px;background:#ffffff;border:2px solid #61666f;border-radius:10px;"></div>
<div class="a" style="left:1515px;top:1374px;width:32px;height:32px;background:#d1d5db;border:3px solid #5b6170;border-radius:4px"></div>
<div class="a" style="left:1635px;top:1363px;width:266px;height:54px;background:#e5e7eb;border:2px solid #61666f;border-radius:10px;"></div>
<div class="t" style="left:1649px;top:1373.3px;font-size:32px;line-height:37px;color:#2f3746;letter-spacing:0.80px;word-spacing:-3px;">mm / dd / yyyy</div>
<div class="a" style="left:1919px;top:1359px;width:458px;height:62px;background:#e5e7eb;border:2px solid #61666f;border-radius:10px;"></div>
<div class="t" style="left:1928px;top:1373.3px;font-size:32px;line-height:37px;color:#2f3746;letter-spacing:0.6px;">Jar</div>
<div class="a" style="left:2394px;top:1334px;width:459px;height:112px;background:#e5e7eb;border:2px solid #61666f;border-radius:10px;"></div>
<svg class="a" style="left:2827px;top:1420px" width="26" height="26" viewBox="0 0 26 26"><path d="M25 1L1 25M25 9L9 25M25 17L17 25" stroke="#4b5563" stroke-width="2"/></svg>
<div class="a" style="left:3015px;top:1342px;width:101px;height:96px;background:#d1d5db;border:2px solid #a3a8b1;border-radius:12px"></div>
<div class="a" style="left:3047px;top:1357px;width:37px;height:66px;background:#fff;border-radius:10px"></div>
<div class="t" style="left:2665.5px;width:800px;text-align:center;top:1371.4px;font-size:35px;line-height:40px;font-weight:bold;color:#111827;">0</div>
<svg class="a" style="left:3282px;top:1370px" width="38" height="40" viewBox="0 0 38 40"><path d="M13 1.5h12v4h-12z" fill="#000"/><rect x="2" y="5" width="34" height="6" rx="1.5" fill="#000"/><path d="M5 11h28l-2 26a3 3 0 0 1-3 3H10a3 3 0 0 1-3-3z" fill="#000"/><rect x="12.5" y="15" width="4.5" height="19" fill="#fff"/><rect x="21" y="15" width="4.5" height="19" fill="#fff"/></svg>
<div class="t" style="left:214px;top:1524.8px;font-size:32px;line-height:37px;color:#2f3746;letter-spacing:0.44px;">Tissues:</div>
<div class="a" style="left:620px;top:1470px;width:517px;height:143px;background:#e5e7eb;border-radius:12px"></div>
<div class="t" style="left:639px;top:1495.3px;font-size:32px;line-height:37px;font-weight:bold;color:#2f3746;letter-spacing:0.74px;">Collection Object</div>
<div class="t" style="left:937.5px;top:1495.3px;font-size:32px;line-height:37px;font-weight:bold;color:#2f3746;letter-spacing:0.59px;">Collection</div>
<svg class="a" style="left:644px;top:1546px" width="32" height="32" viewBox="-4 -4 32 32"><path d="M12.0 2.5V21.5M2.5 12.0H21.5" stroke="#15803d" stroke-width="5" stroke-linecap="round"/></svg>
<div class="t" style="left:214px;top:1679.8px;font-size:36px;line-height:41px;font-weight:bold;color:#2f3746;letter-spacing:0.75px;">Col Obj Attribute</div>
<svg class="a" style="left:539px;top:1682px" width="31" height="31" viewBox="-4 -4 31 31"><path d="M11.5 2.5V20.5M2.5 11.5H20.5" stroke="#9ca3af" stroke-width="5" stroke-linecap="round"/></svg>
<svg class="a" style="left:597px;top:1689px" width="41" height="16" viewBox="-4 -4 41 16"><path d="M4.0 4.0H29.0" stroke="#c81e1e" stroke-width="8" stroke-linecap="round"/></svg>
<div class="a" style="left:212px;top:1734px;width:3152px;height:2px;background:#5f636b"></div>
<div class="t" style="right:2999px;top:1759.3px;font-size:32px;line-height:37px;color:#2f3746;letter-spacing:-0.75px;margin-right:--0.75px;">Size</div>
<div class="a" style="left:619px;top:1744px;width:405px;height:63px;background:#e5e7eb;border:2px solid #61666f;border-radius:10px;"></div>
<div class="t" style="right:2237px;top:1759.3px;font-size:32px;line-height:37px;color:#2f3746;letter-spacing:-1.07px;margin-right:--1.07px;">Sex</div>
<div class="a" style="left:1380px;top:1744px;width:405px;height:63px;background:#e5e7eb;border:2px solid #61666f;border-radius:10px;"></div>
<div class="t" style="left:1396px;top:1759.3px;font-size:32px;line-height:37px;color:#2f3746;letter-spacing:0.5px;">Male</div>
<svg class="a" style="left:1748.5px;top:1767.5px" width="27" height="17" viewBox="-3 -3 27 17"><path d="M0 0L10.5 11L21 0" fill="none" stroke="#4b5563" stroke-width="2.6" stroke-linecap="round" stroke-linejoin="round"/></svg>
<div class="t" style="right:1408px;top:1759.3px;font-size:32px;line-height:37px;color:#2f3746;letter-spacing:0.80px;margin-right:-0.80px;">Weight</div>
<div class="a" style="left:2208px;top:1744px;width:406px;height:63px;background:#e5e7eb;border:2px solid #61666f;border-radius:10px;"></div>
<div class="t" style="right:2996px;top:1847.3px;font-size:32px;line-height:37px;color:#2f3746;letter-spacing:0.84px;margin-right:-0.84px;">Total Count:</div>
<div class="a" style="left:621px;top:1833px;width:663px;height:62px;background:#ffffff;border:2px solid #61666f;border-radius:10px;"></div>
<div class="t" style="right:1873px;top:1847.3px;font-size:32px;line-height:37px;color:#2f3746;letter-spacing:0.74px;margin-right:-0.74px;">Actual Count:</div>
<div class="a" style="left:1744px;top:1833px;width:714px;height:62px;background:#ffffff;border:2px solid #61666f;border-radius:10px;"></div>
<div class="t" style="left:213px;top:1920.8px;font-size:36px;line-height:41px;font-weight:bold;color:#2f3746;letter-spacing:1.20px;">Attachments</div>
<div class="a" style="left:212px;top:1967px;width:3152px;height:2px;background:#5f636b"></div>
<div class="a" style="left:212px;top:2021px;width:161px;height:79px;background:#d1d5db;border-radius:12px"></div>
<div class="t" style="left:245px;top:2044.3px;font-size:32px;line-height:37px;color:#1f2937;letter-spacing:0.50px;">Delete</div>
<div class="a" style="left:3087px;top:2021px;width:149px;height:80px;background:#2563eb;border-radius:12px"></div>
<div class="t" style="left:3120px;top:2044.3px;font-size:32px;line-height:37px;color:#ffffff;letter-spacing:0.05px;">Close</div>
<div class="a" style="left:3252px;top:2021px;width:136px;height:80px;background:#fff;border:2px solid #5f646d;border-radius:12px"></div>
<div class="t" style="left:3285px;top:2044.3px;font-size:32px;line-height:37px;color:#1f2937;letter-spacing:-0.98px;">Save</div>
<svg class="a" style="left:3394px;top:2106px" width="26" height="26" viewBox="0 0 26 26"><path d="M25 1L1 25M25 9L9 25M25 17L17 25" stroke="#4b5563" stroke-width="2"/></svg>
</div>
</body></html>
